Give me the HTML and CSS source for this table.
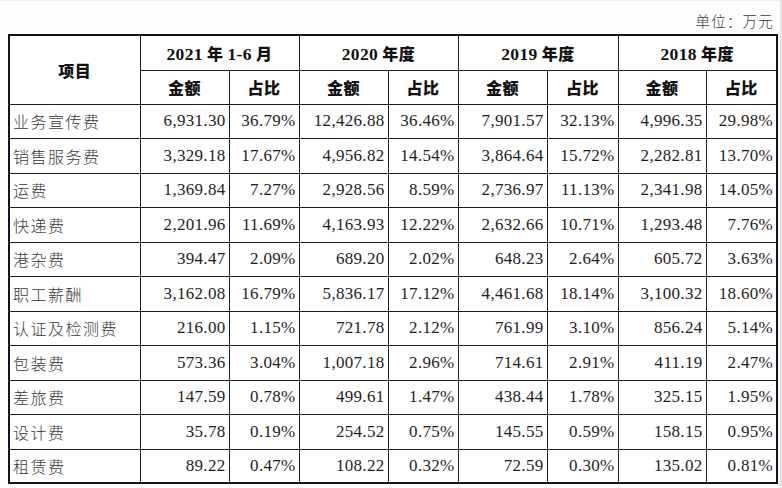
FILE: index.html
```html
<!DOCTYPE html>
<html lang="zh">
<head>
<meta charset="utf-8">
<link rel="stylesheet" href="styles.css">
</head>
<body>
<div class="page">
  <div class="unit">单位：万元</div>
  <table class="tbl">
    <colgroup>
      <col class="c-name"><col class="c-amt"><col class="c-pct"><col class="c-amt"><col class="c-pct"><col class="c-amt"><col class="c-pct2"><col class="c-amt2"><col class="c-pct3">
    </colgroup>
    <thead>
      <tr class="h1">
        <th rowspan="2" class="hname">项目</th>
        <th colspan="2"><span class="yr">2021</span> 年 <span class="yr">1-6</span> 月</th>
        <th colspan="2"><span class="yr">2020</span> 年度</th>
        <th colspan="2"><span class="yr">2019</span> 年度</th>
        <th colspan="2"><span class="yr">2018</span> 年度</th>
      </tr>
      <tr class="h2">
        <th>金额</th><th>占比</th><th>金额</th><th>占比</th><th>金额</th><th>占比</th><th>金额</th><th>占比</th>
      </tr>
    </thead>
    <tbody>
      <tr><td class="name">业务宣传费</td><td>6,931.30</td><td>36.79%</td><td>12,426.88</td><td>36.46%</td><td>7,901.57</td><td>32.13%</td><td>4,996.35</td><td>29.98%</td></tr>
      <tr><td class="name">销售服务费</td><td>3,329.18</td><td>17.67%</td><td>4,956.82</td><td>14.54%</td><td>3,864.64</td><td>15.72%</td><td>2,282.81</td><td>13.70%</td></tr>
      <tr><td class="name">运费</td><td>1,369.84</td><td>7.27%</td><td>2,928.56</td><td>8.59%</td><td>2,736.97</td><td>11.13%</td><td>2,341.98</td><td>14.05%</td></tr>
      <tr><td class="name">快递费</td><td>2,201.96</td><td>11.69%</td><td>4,163.93</td><td>12.22%</td><td>2,632.66</td><td>10.71%</td><td>1,293.48</td><td>7.76%</td></tr>
      <tr><td class="name">港杂费</td><td>394.47</td><td>2.09%</td><td>689.20</td><td>2.02%</td><td>648.23</td><td>2.64%</td><td>605.72</td><td>3.63%</td></tr>
      <tr><td class="name">职工薪酬</td><td>3,162.08</td><td>16.79%</td><td>5,836.17</td><td>17.12%</td><td>4,461.68</td><td>18.14%</td><td>3,100.32</td><td>18.60%</td></tr>
      <tr><td class="name">认证及检测费</td><td>216.00</td><td>1.15%</td><td>721.78</td><td>2.12%</td><td>761.99</td><td>3.10%</td><td>856.24</td><td>5.14%</td></tr>
      <tr><td class="name">包装费</td><td>573.36</td><td>3.04%</td><td>1,007.18</td><td>2.96%</td><td>714.61</td><td>2.91%</td><td>411.19</td><td>2.47%</td></tr>
      <tr><td class="name">差旅费</td><td>147.59</td><td>0.78%</td><td>499.61</td><td>1.47%</td><td>438.44</td><td>1.78%</td><td>325.15</td><td>1.95%</td></tr>
      <tr><td class="name">设计费</td><td>35.78</td><td>0.19%</td><td>254.52</td><td>0.75%</td><td>145.55</td><td>0.59%</td><td>158.15</td><td>0.95%</td></tr>
      <tr><td class="name">租赁费</td><td>89.22</td><td>0.47%</td><td>108.22</td><td>0.32%</td><td>72.59</td><td>0.30%</td><td>135.02</td><td>0.81%</td></tr>
    </tbody>
  </table>
</div>
</body>
</html>
```
FILE: styles.css
```css
html, body {
  margin: 0;
  padding: 0;
  background: #ffffff;
}
.page {
  width: 782px;
  height: 488px;
  padding: 0 5px 0 8px;
  box-sizing: border-box;
  background: #fdfdfd;
  border-top: 1px solid #ececec;
  border-right: 2px solid #e4e4e4;
}
.unit {
  height: 33px;
  box-sizing: border-box;
  padding: 11px 1px 0 0;
  text-align: right;
  font-family: "Noto Sans CJK SC", sans-serif;
  font-weight: 300;
  font-size: 14.5px;
  line-height: 18px;
  letter-spacing: 1.2px;
  color: #3a3a3a;
}
.tbl {
  width: 768px;
  border-collapse: collapse;
  table-layout: fixed;
  border: 2.5px solid #15131f;
  background: #ffffff;
}
.c-name { width: 131px; }
.c-amt { width: 89px; }
.c-pct { width: 70px; }
.c-pct2 { width: 71px; }
.c-amt2 { width: 88px; }
.c-pct3 { width: 71px; }
.tbl th, .tbl td {
  border: 1px solid #1d1b26;
  padding: 0;
}
.tbl th {
  font-family: "Noto Sans CJK SC", sans-serif;
  font-weight: 900;
  font-size: 16px;
  color: #111;
  text-align: center;
  letter-spacing: 0.5px;
}
.yr {
  font-family: "Liberation Serif", serif;
  font-weight: 700;
  font-size: 17.5px;
  letter-spacing: 0.3px;
}
.h1 { height: 35px; }
.h2 { height: 34px; }
.tbl tbody tr { height: 34px; }
.tbl tbody tr:nth-child(even) { height: 35px; }
.tbl td {
  font-family: "Liberation Serif", serif;
  font-size: 17px;
  color: #1e1e1e;
  text-align: right;
  padding-right: 3px;
  letter-spacing: 0.3px;
}
.tbl td.name {
  text-align: left;
  padding-left: 3px;
  font-family: "Noto Sans CJK SC", sans-serif;
  font-weight: 300;
  font-size: 16px;
  letter-spacing: 1.5px;
  color: #3a3a3a;
}
```
